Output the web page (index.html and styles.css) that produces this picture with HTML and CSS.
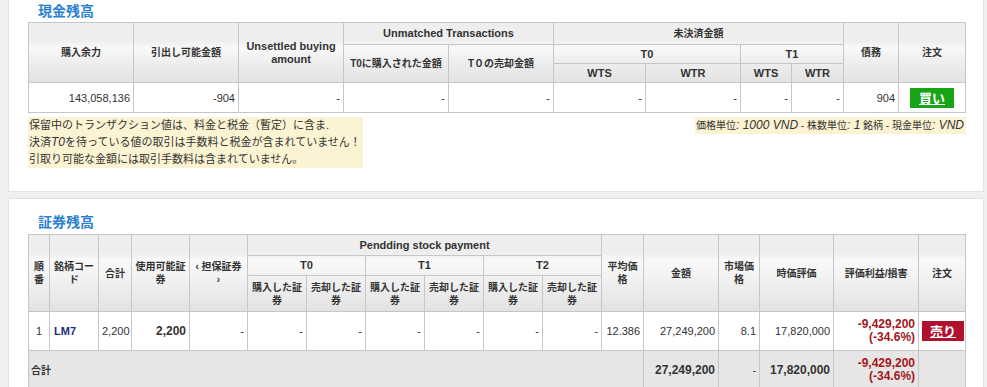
FILE: index.html
```html
<!DOCTYPE html>
<html lang="ja">
<head>
<meta charset="utf-8">
<title>残高</title>
<link rel="stylesheet" href="styles.css">
</head>
<body>
<section class="panel panel-cash">
  <h2 class="title">現金残高</h2>
  <table class="grid">
    <colgroup>
      <col style="width:105px"><col style="width:105px"><col style="width:105px"><col style="width:105px"><col style="width:105px">
      <col style="width:92px"><col style="width:95px"><col style="width:51px"><col style="width:52px"><col style="width:55px"><col style="width:67px">
    </colgroup>
    <thead>
      <tr class="c-h1">
        <th rowspan="3">購入余力</th>
        <th rowspan="3">引出し可能金額</th>
        <th rowspan="3" class="lat">Unsettled buying amount</th>
        <th colspan="2" class="lat">Unmatched Transactions</th>
        <th colspan="4">未決済金額</th>
        <th rowspan="3">債務</th>
        <th rowspan="3">注文</th>
      </tr>
      <tr class="c-h2">
        <th rowspan="2">T0に購入された金額</th>
        <th rowspan="2">T０の売却金額</th>
        <th colspan="2" class="lat">T0</th>
        <th colspan="2" class="lat">T1</th>
      </tr>
      <tr class="c-h3">
        <th class="lat">WTS</th><th class="lat">WTR</th><th class="lat">WTS</th><th class="lat">WTR</th>
      </tr>
    </thead>
    <tbody>
      <tr class="c-row">
        <td>143,058,136</td>
        <td>-904</td>
        <td>-</td>
        <td>-</td>
        <td>-</td>
        <td>-</td>
        <td>-</td>
        <td>-</td>
        <td>-</td>
        <td>904</td>
        <td class="center"><a class="btn buy" href="#">買い</a></td>
      </tr>
    </tbody>
  </table>
  <div class="notes">
    <div class="note">保留中のトランザクション値は、料金と税金（暫定）に含ま.<br>決済<i>T0</i>を待っている値の取引は手数料と税金が含まれていません！<br>引取り可能な金額には取引手数料は含まれていません。</div>
    <div class="note units">価格単位<i>: 1000 VND</i> - 株数単位<i>: 1</i> 銘柄 - 現金単位<i>: VND</i></div>
  </div>
</section>

<section class="panel panel-stock">
  <h2 class="title">証券残高</h2>
  <table class="grid">
    <colgroup>
      <col style="width:21px"><col style="width:49px"><col style="width:33px"><col style="width:58px"><col style="width:58px">
      <col style="width:59px"><col style="width:59px"><col style="width:59px"><col style="width:59px"><col style="width:59px"><col style="width:59px">
      <col style="width:42px"><col style="width:75px"><col style="width:41px"><col style="width:74px"><col style="width:85px"><col style="width:47px">
    </colgroup>
    <thead>
      <tr class="s-h1">
        <th rowspan="3">順番</th>
        <th rowspan="3">銘柄コード</th>
        <th rowspan="3">合計</th>
        <th rowspan="3">使用可能証券</th>
        <th rowspan="3">&lsaquo; 担保証券 &rsaquo;</th>
        <th colspan="6" class="lat">Pendding stock payment</th>
        <th rowspan="3">平均価格</th>
        <th rowspan="3">金額</th>
        <th rowspan="3">市場価格</th>
        <th rowspan="3">時価評価</th>
        <th rowspan="3">評価利益/損害</th>
        <th rowspan="3">注文</th>
      </tr>
      <tr class="s-h2">
        <th colspan="2" class="lat">T0</th>
        <th colspan="2" class="lat">T1</th>
        <th colspan="2" class="lat">T2</th>
      </tr>
      <tr class="s-h3">
        <th>購入した証券</th><th>売却した証券</th>
        <th>購入した証券</th><th>売却した証券</th>
        <th>購入した証券</th><th>売却した証券</th>
      </tr>
    </thead>
    <tbody>
      <tr class="s-row">
        <td class="center">1</td>
        <td class="code">LM7</td>
        <td>2,200</td>
        <td class="strong">2,200</td>
        <td>-</td>
        <td>-</td>
        <td>-</td>
        <td>-</td>
        <td>-</td>
        <td>-</td>
        <td>-</td>
        <td>12.386</td>
        <td>27,249,200</td>
        <td>8.1</td>
        <td>17,820,000</td>
        <td class="loss">-9,429,200<br>(-34.6%)</td>
        <td class="center"><a class="btn sell" href="#">売り</a></td>
      </tr>
      <tr class="s-total">
        <td colspan="12" class="label">合計</td>
        <td class="bold">27,249,200</td>
        <td>-</td>
        <td class="bold">17,820,000</td>
        <td class="loss">-9,429,200<br>(-34.6%)</td>
        <td></td>
      </tr>
    </tbody>
  </table>
</section>
</body>
</html>
```

FILE: styles.css
```css
* {
  box-sizing: border-box;
}

html,
body {
  margin: 0;
}

body {
  background: #f0f0f0;
  font-family: "Liberation Sans", "Noto Sans CJK JP", sans-serif;
  color: #333;
  padding: 0 3px 0 8px;
  height: 387px;
  overflow: hidden;
}

.panel {
  background: #fff;
  border: 1px solid #e3e3e3;
  padding: 0 18px 23px 19px;
}

.panel-cash {
  border-top: 0;
}

.panel-stock {
  margin-top: 6px;
  padding-top: 12px;
}

.title {
  margin: 0 0 2px 10px;
  font-size: 14px;
  line-height: 20px;
  font-weight: bold;
  color: #2a7fd2;
  font-family: "Noto Sans CJK JP", sans-serif;
}

.panel-stock .title {
  margin-bottom: 3px;
}

.grid {
  border-collapse: collapse;
  table-layout: fixed;
  width: 937px;
}

.grid thead {
  background: linear-gradient(to bottom, #eeeeee 0, #eeeeee 18px, #f9f9f9 25px, #f2f2f2 55%, #e2e2e2 100%);
}

.grid th,
.grid td {
  border: 1px solid #c6c6c6;
  padding: 0 3px;
}

.grid th {
  font-size: 10px;
  font-weight: bold;
  line-height: 13px;
  color: #333;
  text-align: center;
  vertical-align: middle;
}

.grid th.lat {
  font-size: 11px;
}

.grid td {
  font-size: 11px;
  text-align: right;
  vertical-align: middle;
  background: #fff;
}

.c-h1 { height: 22px; }
.c-h2 { height: 19px; }
.c-h3 { height: 19px; }
.c-row { height: 30px; }

.s-h1 { height: 21px; }
.s-h2 { height: 20px; }
.s-h3 { height: 36px; }
.s-row { height: 39px; }
.s-total { height: 38px; }

.grid td.center {
  text-align: center;
}

.grid td.code {
  text-align: left;
  font-weight: bold;
  color: #1c2d7c;
  padding-left: 4px;
}

.grid td.strong {
  font-weight: bold;
  font-size: 12px;
}

.grid td.bold {
  font-weight: bold;
  font-size: 12px;
}

.grid td.loss {
  color: #a5161c;
  font-weight: bold;
  font-size: 12px;
  line-height: 13px;
}

.s-total td {
  background: #e6e6e6;
}

.grid td.label {
  text-align: left;
  font-size: 10px;
  font-weight: bold;
  padding-left: 2px;
}

.btn {
  display: inline-block;
  height: 20px;
  line-height: 20px;
  color: #fff;
  font-weight: bold;
  font-size: 13px;
  text-decoration: underline;
  text-align: center;
  vertical-align: middle;
  font-family: "Noto Sans CJK JP", sans-serif;
}

.buy {
  width: 44px;
  background: #17a417;
}

.sell {
  width: 42px;
  background: #b1112d;
}

.notes {
  display: flex;
  justify-content: space-between;
  align-items: flex-start;
  margin-top: 4px;
}

.note {
  background: #fcf3d3;
  font-size: 11px;
  line-height: 17px;
  padding: 0 2px 0 1px;
  color: #333;
}

.note.units {
  font-size: 10px;
  margin-right: -1px;
}

.note i {
  font-size: 12px;
}
```
